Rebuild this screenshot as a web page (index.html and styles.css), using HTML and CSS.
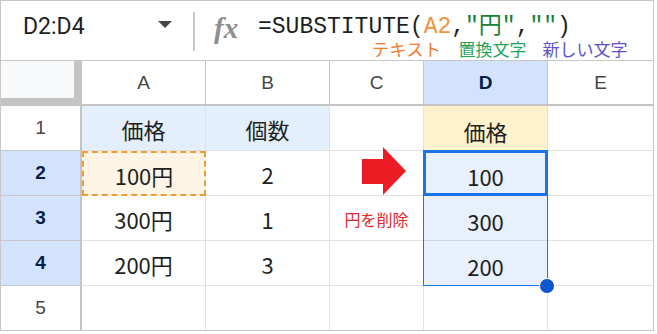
FILE: index.html
```html
<!DOCTYPE html>
<html lang="ja">
<head>
    <meta charset="UTF-8">
    <meta name="viewport" content="width=device-width, initial-scale=1.0">
    <title>SUBSTITUTE</title>
    <link rel="stylesheet" href="styles.css">
</head>
<body>

<div class="sheet">
    <div class="formula-bar">
        <div class="name-box">
            <span class="name">D2:D4</span>
            <span class="caret"></span>
        </div>
        <div class="divider"></div>
        <div class="fx">fx</div>
        <div class="formula">
            <div class="formula-text">=SUBSTITUTE(<span class="ref">A2</span>,<span class="str">"円"</span>,<span class="str">""</span>)</div>
            <div class="notes">
                <span class="note note-text">テキスト</span>
                <span class="note note-old">置換文字</span>
                <span class="note note-new">新しい文字</span>
            </div>
        </div>
    </div>

    <div class="grid">
        <div class="row">
            <div class="cell corner"></div>
            <div class="cell col-head">A</div>
            <div class="cell col-head">B</div>
            <div class="cell col-head">C</div>
            <div class="cell col-head sel">D</div>
            <div class="cell col-head">E</div>
        </div>
        <div class="row">
            <div class="cell row-head">1</div>
            <div class="cell title">価格</div>
            <div class="cell title">個数</div>
            <div class="cell"></div>
            <div class="cell col-d result-title">価格</div>
            <div class="cell"></div>
        </div>
        <div class="row">
            <div class="cell row-head sel">2</div>
            <div class="cell copied">100円</div>
            <div class="cell">2</div>
            <div class="cell"></div>
            <div class="cell col-d picked">100</div>
            <div class="cell"></div>
        </div>
        <div class="row">
            <div class="cell row-head sel">3</div>
            <div class="cell">300円</div>
            <div class="cell">1</div>
            <div class="cell memo">円を削除</div>
            <div class="cell col-d picked">300</div>
            <div class="cell"></div>
        </div>
        <div class="row">
            <div class="cell row-head sel">4</div>
            <div class="cell">200円</div>
            <div class="cell">3</div>
            <div class="cell"></div>
            <div class="cell col-d picked">200</div>
            <div class="cell"></div>
        </div>
        <div class="row last">
            <div class="cell row-head">5</div>
            <div class="cell"></div>
            <div class="cell"></div>
            <div class="cell"></div>
            <div class="cell"></div>
            <div class="cell"></div>
        </div>

        <svg class="arrow" viewBox="0 0 44 48" width="44" height="48">
            <polygon points="0,12 21,12 21,0 44,24 21,48 21,37 0,37" fill="#ed1c24"/>
        </svg>
        <div class="range"></div>
        <div class="active"></div>
        <div class="handle"></div>
    </div>
</div>

</body>
</html>
```

FILE: styles.css
```css
body {
    margin: 0;
    background: #fff;
    font-family: "Noto Sans CJK JP", sans-serif;
}

.sheet {
    width: 652px;
    border: 1px solid #c7c7c7;
    background: #fff;
}

/* formula bar */

.formula-bar {
    display: flex;
    align-items: flex-start;
    height: 59px;
    border-bottom: 1px solid #c7c7c7;
}

.name-box {
    display: flex;
    align-items: center;
    width: 192px;
    height: 50px;
    flex-shrink: 0;
}

.name {
    padding-left: 22px;
    font-family: Roboto, "Liberation Sans", sans-serif;
    font-size: 23px;
    color: #1f1f1f;
}

.caret {
    margin-left: auto;
    margin-right: 21px;
    margin-top: -3px;
    width: 0;
    height: 0;
    border-left: 7px solid transparent;
    border-right: 7px solid transparent;
    border-top: 7px solid #444746;
}

.divider {
    width: 2px;
    height: 39px;
    margin-top: 11px;
    background: #c7c7c7;
    flex-shrink: 0;
}

.fx {
    width: 27px;
    margin-left: 19px;
    margin-top: 13px;
    font-family: "Liberation Serif", serif;
    font-style: italic;
    font-weight: bold;
    font-size: 29px;
    line-height: 28px;
    color: #8e8e8e;
    flex-shrink: 0;
}

.formula {
    margin-left: 17px;
    margin-top: 15px;
}

.formula-text {
    font-family: "Liberation Mono", "Noto Sans CJK JP", monospace;
    font-size: 23px;
    line-height: 23px;
    color: #1f1f1f;
    white-space: nowrap;
}

.formula-text .ref {
    color: #f4913b;
}

.formula-text .str {
    color: #188038;
}

.notes {
    display: flex;
    gap: 17px;
    margin-top: 1px;
    padding-left: 114px;
    font-size: 17px;
    line-height: 18px;
    white-space: nowrap;
}

.note-text {
    color: #f47a2c;
    letter-spacing: 0.5px;
}

.note-old {
    color: #1fa45a;
    margin-right: -1px;
}

.note-new {
    color: #5b52cc;
}

/* grid */

.grid {
    position: relative;
    display: grid;
    grid-template-columns: 81px 124px 124px 94px 124px 105px;
    grid-template-rows: repeat(5, 45px) 44px;
}

.row {
    display: contents;
}

.cell {
    display: flex;
    align-items: center;
    justify-content: center;
    padding-top: 2px;
    box-sizing: border-box;
    border-right: 1px solid #e1e1e1;
    border-bottom: 1px solid #e1e1e1;
    font-size: 22px;
    color: #1f1f1f;
}

.row .cell:last-child {
    border-right: none;
}

.row.last .cell {
    border-bottom: none;
}

.corner {
    background: #f8f9fa;
    border-right: 8px solid #c4c4c4;
    border-bottom: 8px solid #c4c4c4;
}

.col-head {
    padding-top: 0;
    border-right-color: #c7c7c7;
    border-bottom: 2px solid #c4c4c4;
    font-family: "Liberation Sans", Arial, sans-serif;
    font-size: 19px;
    color: #444746;
}

.row-head {
    padding-top: 0;
    border-right: 2px solid #c4c4c4;
    border-bottom-color: #c7c7c7;
    font-family: "Liberation Sans", Arial, sans-serif;
    font-size: 19px;
    color: #444746;
}

.sel {
    background: #d3e3fd;
    color: #041e49;
    font-weight: bold;
}

.title {
    background: #e3effc;
}

.col-d {
    padding-top: 6px;
}

.result-title {
    background: #fef2cc;
}

.picked {
    background: #e7f0fc;
    border-bottom-color: #cdd6e2;
}

.copied {
    background: #fdf4e6;
    border: 2px dashed #f39c34;
}

.memo {
    font-size: 16px;
    color: #e5262c;
}

/* overlays */

.arrow {
    position: absolute;
    left: 361px;
    top: 86px;
}

.range {
    position: absolute;
    left: 422px;
    top: 89px;
    width: 125px;
    height: 136px;
    box-sizing: border-box;
    border: 1px solid #1b73e8;
}

.active {
    position: absolute;
    left: 422px;
    top: 89px;
    width: 125px;
    height: 46px;
    box-sizing: border-box;
    border: 3px solid #1b73e8;
}

.handle {
    position: absolute;
    left: 538px;
    top: 217px;
    width: 14px;
    height: 14px;
    border: 1px solid #fff;
    border-radius: 50%;
    background: #0b57d0;
}
```
